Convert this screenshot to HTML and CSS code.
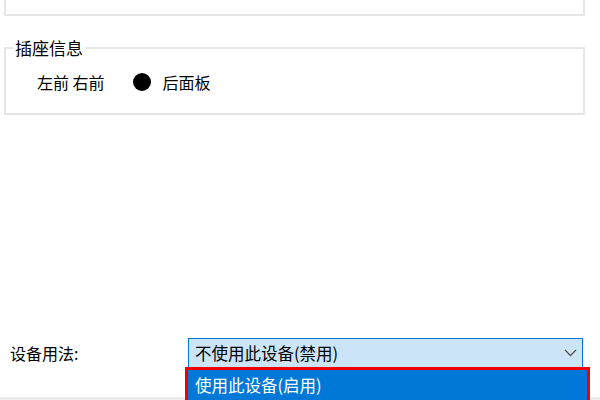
FILE: index.html
```html
<!DOCTYPE html>
<html lang="zh-CN">
<head>
    <meta charset="UTF-8">
    <title>设备属性</title>
    <link rel="stylesheet" href="styles.css">
</head>
<body>
    <div class="top-box"></div>

    <fieldset class="socket">
        <legend>插座信息</legend>
        <div class="socket-row">
            <span>左前 右前</span>
            <span class="dot"></span>
            <span>后面板</span>
        </div>
    </fieldset>

    <div class="usage">
        <label class="usage-label">设备用法:</label>
        <div class="combo">
            <span class="combo-text">不使用此设备(禁用)</span>
            <svg class="chevron" width="13" height="8" viewBox="0 0 13 8">
                <path d="M1 1 L6.5 6.5 L12 1" fill="none" stroke="#555" stroke-width="1.3"/>
            </svg>
            <ul class="combo-list">
                <li class="combo-item selected">使用此设备(启用)</li>
            </ul>
        </div>
    </div>

    <div class="footer-strip"></div>
</body>
</html>
```

FILE: styles.css
```css
body {
    margin: 0;
    height: 400px;
    overflow: hidden;
    display: flex;
    flex-direction: column;
    background: #fff;
    color: #000;
    font-family: "Noto Sans CJK SC", "Noto Sans", sans-serif;
    font-size: 16px;
}

.top-box {
    margin: -30px 15px 0 4px;
    height: 42px;
    border: 2px solid #e6e6e6;
    flex-shrink: 0;
}

.socket {
    margin: 22px 15px 0 4px;
    padding: 14px 0 21px 7px;
    border: 2px solid #e6e6e6;
    min-width: 0;
}

.socket legend {
    padding: 0 2px;
    font-size: 17px;
    line-height: 20px;
}

.socket-row {
    display: flex;
    align-items: center;
    line-height: 20px;
    padding-left: 24px;
}

.dot {
    width: 18px;
    height: 18px;
    border-radius: 50%;
    background: #000;
    margin: 0 12px 0 28px;
}

.usage {
    margin-top: auto;
    margin-bottom: 29px;
    display: flex;
    align-items: center;
    padding-left: 10px;
}

.usage-label {
    width: 178px;
}

.combo {
    position: relative;
    width: 387px;
    height: 28px;
    border: 1px solid #0078d7;
    background: #cce4f7;
    display: flex;
    align-items: center;
    padding-left: 6px;
    box-sizing: content-box;
}

.combo-text {
    flex: 1;
    font-size: 16.5px;
}

.chevron {
    margin-right: 5px;
}

.combo-list {
    position: absolute;
    left: -4px;
    top: 28px;
    width: 399px;
    margin: 0;
    padding: 0;
    list-style: none;
    border: 3px solid #f00000;
    background: #0078d7;
}

.combo-item {
    height: 36px;
    line-height: 30px;
    padding-left: 7px;
    font-size: 16.5px;
}

.combo-item.selected {
    color: #fff;
}

.footer-strip {
    height: 3px;
    background: #ececec;
    flex-shrink: 0;
}
```
